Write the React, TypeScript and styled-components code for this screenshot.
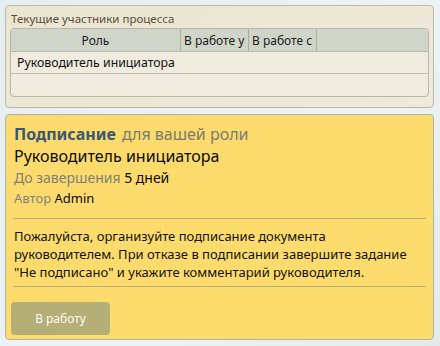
import React from "react";
import styled, { createGlobalStyle } from "styled-components";

const GlobalStyle = createGlobalStyle`
  html, body {
    margin: 0;
    padding: 0;
  }
  body {
    width: 440px;
    height: 346px;
    overflow: hidden;
    font-family: "Noto Sans", "Open Sans", sans-serif;
    background: linear-gradient(135deg, #e6eef0 0%, #edf3f4 60%, #e3ebe9 100%);
  }
`;

const Page = styled.div`
  display: flex;
  flex-direction: column;
  gap: 6px;
  padding: 5px 6px 6px 5px;
`;

const ParticipantsPanel = styled.section`
  height: 103px;
  box-sizing: border-box;
  border: 1px solid #bcb9ab;
  border-radius: 4px;
  background: linear-gradient(135deg, #ebe5d2 0%, #eee9da 100%);
  padding: 4px 4px 0 4px;
`;

const PanelTitle = styled.div`
  font-size: 11.5px;
  line-height: 18px;
  color: #5a4e34;
  margin-left: 1px;
`;

const Table = styled.div`
  border: 1px solid #b9b7aa;
  border-radius: 4px;
  overflow: hidden;
  background: #efebdf;
`;

const HeaderRow = styled.div`
  display: grid;
  grid-template-columns: 170px 68px 68px 1fr;
  height: 22px;
  background: #cfd5c9;
  border-bottom: 1px solid #b7b9ad;
`;

const HeaderCell = styled.div<{ $center?: boolean }>`
  display: flex;
  align-items: center;
  justify-content: ${(p) => (p.$center ? "center" : "flex-start")};
  padding-left: ${(p) => (p.$center ? "0" : "3px")};
  font-size: 12px;
  color: #1c1c1c;
  border-right: 1px solid #a9ad9f;
  white-space: nowrap;
  &:last-child {
    border-right: none;
  }
`;

const BodyRow = styled.div`
  height: 21px;
  display: flex;
  align-items: center;
  padding-left: 6px;
  font-size: 12.3px;
  color: #111;
  border-bottom: 1px solid #c4c1b4;
  &:last-child {
    border-bottom: none;
    height: 22px;
  }
`;

const TaskPanel = styled.section`
  height: 226px;
  box-sizing: border-box;
  border: 1px solid #b3b2a9;
  border-radius: 4px;
  background: linear-gradient(135deg, #fcdb6c 0%, #fddc6e 100%);
  padding: 8px 6px 4px 5px;
  display: flex;
  flex-direction: column;
`;

const Info = styled.div`
  padding: 0 3px;
`;

const TitleLine = styled.div`
  font-size: 16px;
  line-height: 22px;
  color: #7a7a72;
`;

const TaskName = styled.span`
  font-weight: 700;
  color: #3a5674;
  margin-right: 6px;
`;

const RoleLine = styled.div`
  font-size: 16px;
  line-height: 23px;
  color: #0b0b0b;
`;

const MetaLine = styled.div<{ $size: number }>`
  font-size: ${(p) => p.$size}px;
  line-height: 20px;
  color: #808078;
  & b {
    font-weight: 400;
    color: #0b0b0b;
  }
`;

const Divider = styled.hr<{ $gap?: number }>`
  border: none;
  border-top: 1px solid #b5ad8c;
  margin: ${(p) => p.$gap ?? 0}px 1px 0 2px;
`;

const Message = styled.p`
  margin: 0;
  padding: 8px 3px 5px;
  font-size: 13px;
  line-height: 18px;
  color: #111;
`;

const ActionButton = styled.button`
  margin-top: 15px;
  width: 99px;
  height: 35px;
  border: none;
  border-radius: 4px;
  background: #b5ae77;
  color: #fbfaf2;
  font-family: inherit;
  font-size: 12px;
  cursor: pointer;
`;

const participants = [{ role: "Руководитель инициатора" }, { role: "" }];

export default function App() {
  return (
    <>
      <GlobalStyle />
      <Page>
        <ParticipantsPanel>
          <PanelTitle>Текущие участники процесса</PanelTitle>
          <Table>
            <HeaderRow>
              <HeaderCell $center>Роль</HeaderCell>
              <HeaderCell>В работе у</HeaderCell>
              <HeaderCell>В работе с</HeaderCell>
              <HeaderCell />
            </HeaderRow>
            {participants.map((p, i) => (
              <BodyRow key={i}>{p.role}</BodyRow>
            ))}
          </Table>
        </ParticipantsPanel>

        <TaskPanel>
          <Info>
            <TitleLine>
              <TaskName>Подписание</TaskName>для вашей роли
            </TitleLine>
            <RoleLine>Руководитель инициатора</RoleLine>
            <MetaLine $size={14}>
              До завершения <b>5 дней</b>
            </MetaLine>
            <MetaLine $size={13}>
              Автор <b>Admin</b>
            </MetaLine>
          </Info>
          <Divider $gap={10} />
          <Message>
            Пожалуйста, организуйте подписание документа руководителем. При
            отказе в подписании завершите задание "Не подписано" и укажите
            комментарий руководителя.
          </Message>
          <Divider />
          <ActionButton>В работу</ActionButton>
        </TaskPanel>
      </Page>
    </>
  );
}
